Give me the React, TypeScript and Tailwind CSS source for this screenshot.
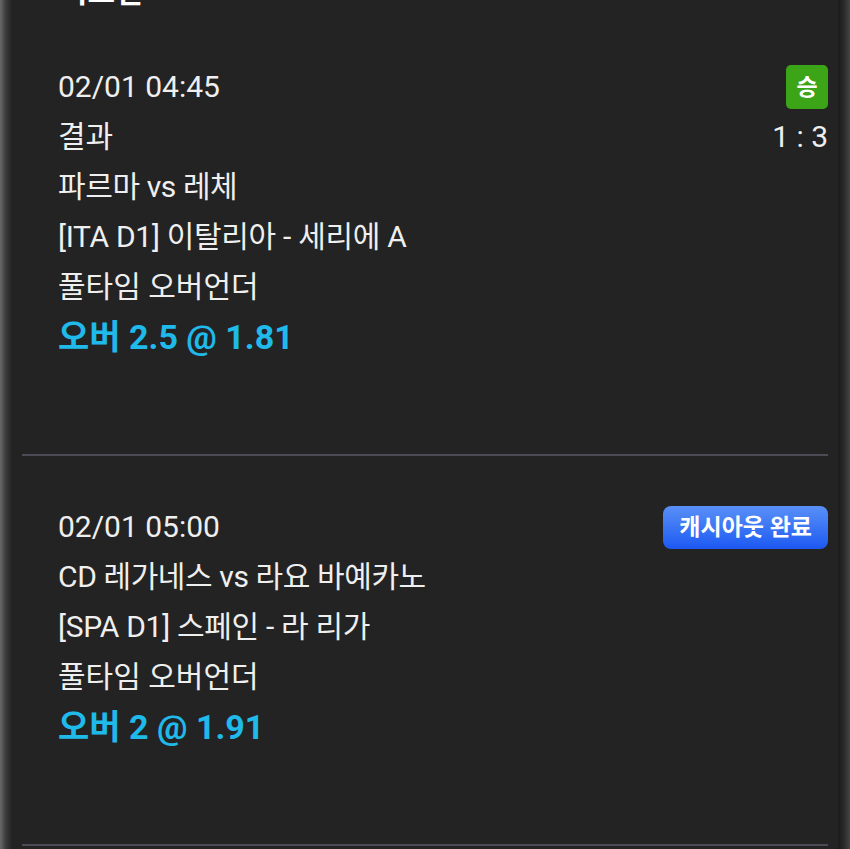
const bets = [
  {
    time: '02/01 04:45',
    result: '결과',
    score: '1 : 3',
    status: 'win',
    match: '파르마 vs 레체',
    league: '[ITA D1] 이탈리아 - 세리에 A',
    market: '풀타임 오버언더',
    pick: '오버 2.5 @ 1.81',
  },
  {
    time: '02/01 05:00',
    status: 'cashout',
    match: 'CD 레가네스 vs 라요 바예카노',
    league: '[SPA D1] 스페인 - 라 리가',
    market: '풀타임 오버언더',
    pick: '오버 2 @ 1.91',
  },
];

const font = { fontFamily: 'Roboto, "Noto Sans CJK KR", sans-serif' };

function BetCard({ bet }: { bet: (typeof bets)[number] }) {
  return (
    <div>
      <div className="pt-[46px] pb-[92px] pl-[36px] text-[30px] leading-[50px] text-[#efefef]">
        <div className="flex items-center justify-between">
          <span>{bet.time}</span>
          {bet.status === 'win' && (
            <span className="flex h-[44px] w-[42px] items-center justify-center rounded-[5px] bg-[#3ba517] text-[23px] font-bold leading-none text-white">
              승
            </span>
          )}
          {bet.status === 'cashout' && (
            <span className="flex h-[43px] items-center rounded-[8px] bg-gradient-to-b from-[#5a8ff7] to-[#1c58f2] px-[16px] text-[23px] font-bold leading-none text-white">
              캐시아웃 완료
            </span>
          )}
        </div>
        {bet.result && (
          <div className="flex justify-between">
            <span>{bet.result}</span>
            <span>{bet.score}</span>
          </div>
        )}
        <div className="tracking-[-0.4px]">{bet.match}</div>
        <div className="tracking-[-0.3px]">{bet.league}</div>
        <div>{bet.market}</div>
        <div className="text-[34px] font-bold text-[#1fb9ea]">{bet.pick}</div>
      </div>
      <div className="h-[2px] bg-[#4b4b55]" />
    </div>
  );
}

export default function App() {
  return (
    <div className="flex h-[849px] w-[850px] overflow-hidden bg-[#232323]" style={font}>
      <div className="w-[12px] shrink-0 bg-gradient-to-r from-[#6a6a6a] via-[#3a3a3a] to-[#242424]" />
      <div className="flex flex-1 flex-col">
        <div className="-mt-[26px] flex h-[36px] shrink-0 items-center gap-[20px] pl-[20px]">
          <span className="text-[26px] leading-none text-white">‹</span>
          <span className="text-[30px] font-bold leading-none text-white">리그별</span>
        </div>
        <div className="mt-[6px] px-[10px]">
          {bets.map((bet) => (
            <BetCard key={bet.time} bet={bet} />
          ))}
        </div>
      </div>
      <div className="w-[12px] shrink-0 bg-gradient-to-r from-[#1a1a1a] via-[#2a2a2a] to-[#454545]" />
    </div>
  );
}
